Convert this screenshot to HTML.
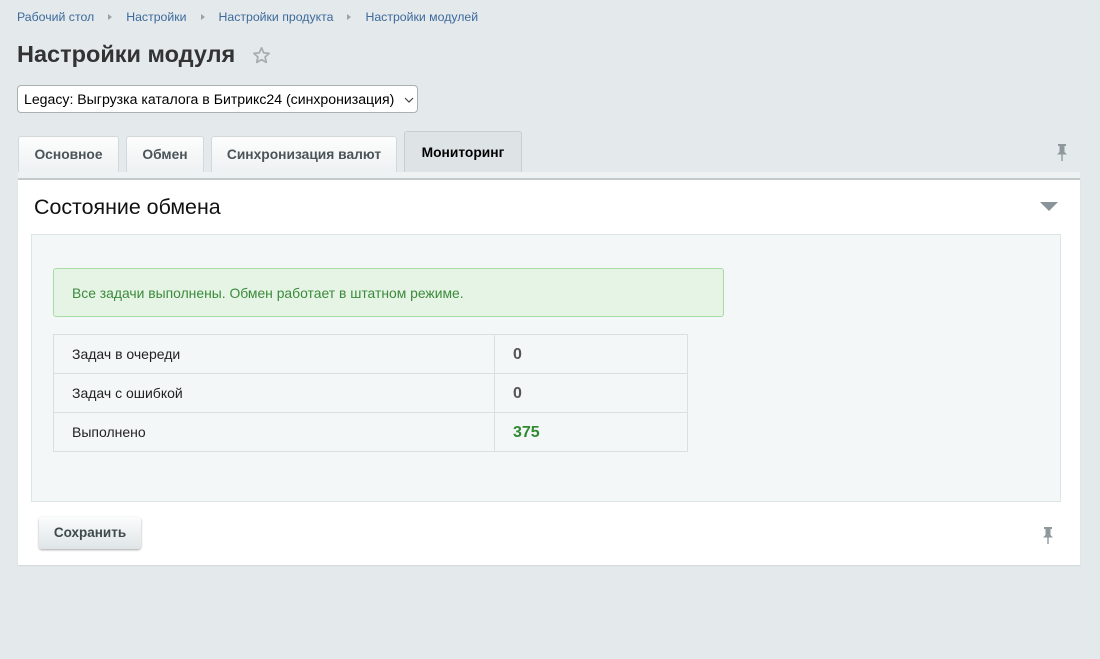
<!DOCTYPE html>
<html><head><meta charset="utf-8"><style>
*{box-sizing:border-box;margin:0;padding:0}
body{width:1100px;height:659px;background:#e4e9eb;font-family:"Liberation Sans",Arial,sans-serif;position:relative;overflow:hidden;color:#000}
.a{position:absolute}
.bc{top:10px;left:17px;font-size:12.3px;color:#3d6a9c}
.bc span{margin-right:10px}
.bc i{display:inline-block;width:0;height:0;border-left:4px solid #9aa4a8;border-top:3.5px solid transparent;border-bottom:3.5px solid transparent;margin-right:14px;margin-left:4px;vertical-align:1px}
h1{position:absolute;left:17px;top:41px;font-size:23.5px;font-weight:bold;color:#333}
.sel{left:17px;top:85px;width:401px;height:28px;background:#fff;border:1px solid #a9b1b4;border-radius:4px;font-size:14.1px;padding:5px 0 0 6px;color:#000;white-space:nowrap}
.tab{top:136px;height:36px;background:linear-gradient(#fdfdfd,#eef1f2);border:1px solid #d3d9db;border-bottom:none;border-radius:3px 3px 0 0;font-size:13.8px;font-weight:bold;color:#4b5457;text-align:center;padding-top:10px;white-space:nowrap}
.tab.act{top:131px;height:41px;background:#dee4e6;border-color:#c7cfd1;color:#000;padding-top:13px}
.band{left:18px;top:172px;width:1062px;height:6px;background:#eef2f3}
.card{left:18px;top:178px;width:1062px;height:387px;background:#fff;border-top:2px solid #c3cacc;box-shadow:0 1px 1px rgba(0,0,0,.08)}
.inner{left:31px;top:234px;width:1030px;height:268px;background:#f4f7f8;border:1px solid #dde4e6}
.alert{left:53px;top:268px;width:671px;height:49px;background:#e6f4e6;border:1px solid #a8dba8;border-radius:3px;color:#3b8a3b;font-size:13.9px;padding:16px 0 0 18px;white-space:nowrap}
table{position:absolute;left:53px;top:334px;width:635px;border-collapse:collapse;font-size:14px}
td{border:1px solid #dcdfe0;height:39px;padding-left:18px;color:#222}
td.v{width:193px;font-weight:bold;font-size:16px;color:#555;padding-top:2px}
.btn{left:39px;top:517px;width:102px;height:32px;border-radius:3px;background:linear-gradient(#fbfcfc,#dfe5e7);box-shadow:0 1px 2px rgba(0,0,0,.35);font-size:13.5px;font-weight:bold;color:#3f4a4d;text-align:center;padding-top:8px}
</style></head><body>
<div class="a bc"><span>Рабочий стол</span><i></i><span>Настройки</span><i></i><span>Настройки продукта</span><i></i><span>Настройки модулей</span></div>
<h1>Настройки модуля</h1>
<svg class="a" style="left:252px;top:46px" width="19" height="19" viewBox="0 0 20 20"><path d="M10 2l2.4 5.2 5.6.6-4.2 3.8 1.2 5.6L10 14.4 5 17.2l1.2-5.6L2 7.8l5.6-.6z" fill="none" stroke="#a5adb1" stroke-width="1.8" stroke-linejoin="round"/></svg>
<div class="a sel">Legacy: Выгрузка каталога в Битрикс24 (синхронизация)</div>
<svg class="a" style="left:404px;top:96px" width="10" height="8"><path d="M1 2l4 4 4-4" fill="none" stroke="#444" stroke-width="1.2"/></svg>
<div class="a tab" style="left:18px;width:101px">Основное</div>
<div class="a tab" style="left:126px;width:78px">Обмен</div>
<div class="a tab" style="left:211px;width:186px">Синхронизация валют</div>
<div class="a tab act" style="left:404px;width:118px">Мониторинг</div>
<svg class="a" style="left:1055px;top:143px" width="14" height="19"><path d="M3 1h8v2h-1.5v6l2.5 2.5H2L4.5 9V3H3z M6.3 11.5h1.4V18H6.3z" fill="#8f999d"/></svg>
<div class="a band"></div>
<div class="a card"></div>
<div class="a" style="left:34px;top:195px;font-size:21.4px;color:#111">Состояние обмена</div>
<svg class="a" style="left:1040px;top:202px" width="18" height="9"><path d="M0 0h18L9 9z" fill="#8a9397"/></svg>
<div class="a inner"></div>
<div class="a alert">Все задачи выполнены. Обмен работает в штатном режиме.</div>
<table>
<tr><td>Задач в очереди</td><td class="v">0</td></tr>
<tr><td>Задач с ошибкой</td><td class="v">0</td></tr>
<tr><td>Выполнено</td><td class="v" style="color:#2f8a2f">375</td></tr>
</table>
<div class="a btn">Сохранить</div>
<svg class="a" style="left:1041px;top:526px" width="14" height="19"><path d="M3 1h8v2h-1.5v6l2.5 2.5H2L4.5 9V3H3z M6.3 11.5h1.4V18H6.3z" fill="#8f999d"/></svg>
</body></html>
